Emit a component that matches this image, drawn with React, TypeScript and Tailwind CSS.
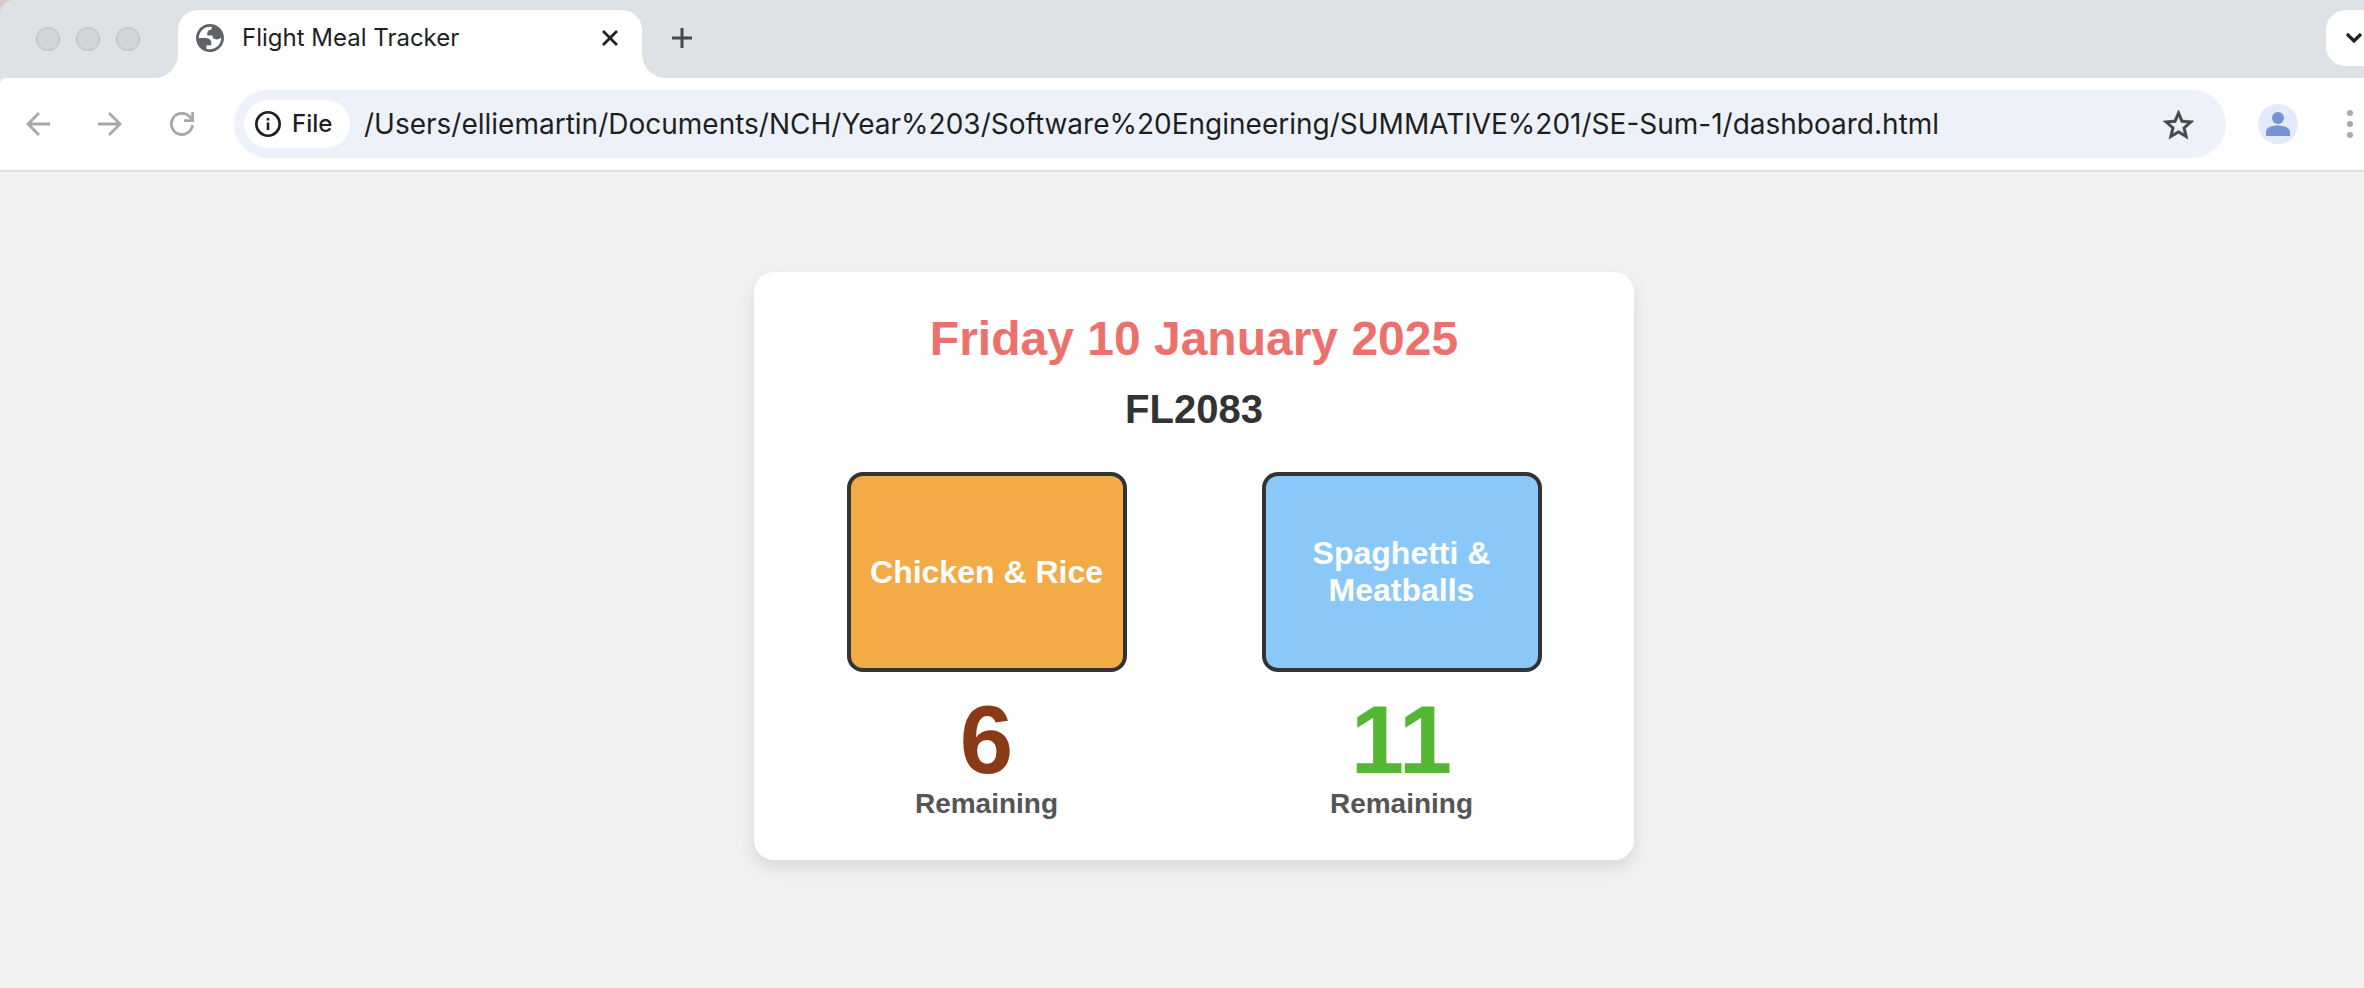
import React from "react";

const meals = [
  { name: "Chicken & Rice", remaining: 6, box: "bg-[#f2ab46]", count: "text-[#8b3a17]" },
  { name: "Spaghetti & Meatballs", remaining: 11, box: "bg-[#8ac8f9]", count: "text-[#55b634]" },
];

function GlobeIcon() {
  return (
    <svg viewBox="2 2 20 20" className="size-7 shrink-0" fill="#5f6368" fillRule="evenodd" aria-hidden="true">
      <path d="M12 2C6.48 2 2 6.48 2 12s4.48 10 10 10 10-4.48 10-10S17.52 2 12 2zM4 12h4.4c3.407.022 4.922 1.73 4.543 5.127H9.488v2.47a8.004 8.004 0 0 0 10.498-8.08C19.327 12.506 18.332 13 17 13c-2.137 0-3.206-.916-3.206-2.75h-3.748c-.274-2.728.683-4.092 2.87-4.092 0-.975.327-1.597.811-1.97A8.004 8.004 0 0 0 4 12z" />
    </svg>
  );
}

function TabStrip() {
  return (
    <div className="flex h-[78px] items-end overflow-hidden rounded-tl-[14px] bg-[#dde2e6]">
      <div className="flex h-full items-center gap-4 pl-9">
        <span className="size-6 rounded-full border border-[#b9bbbd] bg-[#d2d5d7]" />
        <span className="size-6 rounded-full border border-[#b9bbbd] bg-[#d2d5d7]" />
        <span className="size-6 rounded-full border border-[#b9bbbd] bg-[#d2d5d7]" />
      </div>
      <div className="ml-[14px] size-6 bg-white">
        <div className="size-full rounded-br-full bg-[#dde2e6]" />
      </div>
      <div className="flex h-[68px] w-[464px] items-center rounded-t-[20px] bg-white pr-6 pb-3 pl-[18px]">
        <GlobeIcon />
        <span className="ml-[18px] grow text-2xl text-[#1f1f1f]">Flight Meal Tracker</span>
        <button type="button" aria-label="Close tab">
          <svg viewBox="0 0 16 16" className="size-4" stroke="#1f1f1f" strokeWidth="2.8" aria-hidden="true">
            <path d="M1 1l14 14M15 1L1 15" />
          </svg>
        </button>
      </div>
      <div className="size-6 bg-white">
        <div className="size-full rounded-bl-full bg-[#dde2e6]" />
      </div>
      <button type="button" aria-label="New tab" className="mb-[30px] ml-[6px]">
        <svg viewBox="0 0 20 20" className="size-5" stroke="#474747" strokeWidth="3" aria-hidden="true">
          <path d="M10 0v20M0 10h20" />
        </svg>
      </button>
      <button
        type="button"
        aria-label="Search tabs"
        className="mr-[6px] mb-3 ml-auto flex h-14 w-14 items-center justify-center rounded-[20px] bg-white"
      >
        <svg viewBox="0 0 18 12" className="h-3 w-[18px]" fill="none" stroke="#1f1f1f" strokeWidth="3.2" aria-hidden="true">
          <path d="M2 2l7 7 7-7" />
        </svg>
      </button>
    </div>
  );
}

function Toolbar() {
  return (
    <div className="flex h-[94px] items-center rounded-tl-[6px] border-b-2 border-[#dfdfdf] bg-white pl-[26px]">
      <div className="flex items-center gap-12 text-[#a8a8a8]">
        <button type="button" aria-label="Back">
          <svg viewBox="0 0 24 24" className="size-6" fill="none" stroke="currentColor" strokeWidth="2.8" aria-hidden="true">
            <path d="M24 12H2M13 1L2 12l11 11" />
          </svg>
        </button>
        <button type="button" aria-label="Forward">
          <svg viewBox="0 0 24 24" className="size-6" fill="none" stroke="currentColor" strokeWidth="2.8" aria-hidden="true">
            <path d="M0 12h22M11 1l11 11-11 11" />
          </svg>
        </button>
        <button type="button" aria-label="Reload">
          <svg viewBox="0 0 24 24" className="size-6" fill="none" stroke="currentColor" strokeWidth="2.8" aria-hidden="true">
            <path d="M22.5 13A10.600 10.600 0 1 1 20 5l2 2.600" />
            <path d="M22.6 0v8.600H14" />
          </svg>
        </button>
      </div>
      <div className="ml-10 flex h-[68px] grow items-center rounded-full bg-[#edf2fa] pr-8 pl-[10px]">
        <button type="button" className="flex h-12 w-[106px] shrink-0 items-center rounded-full bg-white pl-[11px]">
          <svg viewBox="0 0 26 26" className="size-[26px]" fill="none" stroke="#1f1f1f" strokeWidth="2.6" aria-hidden="true">
            <circle cx="13" cy="13" r="11.7" />
            <path d="M13 11.5v7.500M13 7v2.600" />
          </svg>
          <span className="ml-[11px] text-2xl font-medium text-[#1f1f1f]">File</span>
        </button>
        <input
          aria-label="Address"
          readOnly
          value="/Users/elliemartin/Documents/NCH/Year%203/Software%20Engineering/SUMMATIVE%201/SE-Sum-1/dashboard.html"
          className="ml-[14px] min-w-0 grow bg-transparent text-[28px] text-[#1f1f1f] outline-none"
        />
        <button type="button" aria-label="Bookmark this page">
          <svg
            viewBox="2 2 20 19"
            className="h-[29px] w-[31px] overflow-visible"
            fill="#474747"
            stroke="#474747"
            strokeWidth="0.4"
            aria-hidden="true"
          >
            <path d="M22 9.240l-7.190-.620L12 2 9.190 8.630 2 9.240l5.460 4.730L5.820 21 12 17.270 18.180 21l-1.630-7.030L22 9.240zM12 15.400l-3.760 2.270 1-4.280-3.320-2.880 4.380-.380L12 6.100l1.710 4.040 4.380.380-3.320 2.880 1 4.280L12 15.400z" />
          </svg>
        </button>
      </div>
      <button
        type="button"
        aria-label="Profile"
        className="ml-8 flex size-10 items-center justify-center rounded-full bg-[#e3eafb]"
      >
        <svg viewBox="0 0 24 24" className="size-6" fill="#7693d8" aria-hidden="true">
          <circle cx="12" cy="6" r="6" />
          <path d="M0 24v-4c0-4.500 6-6.500 12-6.500s12 2 12 6.500v4z" />
        </svg>
      </button>
      <button type="button" aria-label="Menu" className="mr-[34px] ml-12">
        <svg viewBox="0 0 8 28" className="h-7 w-2" fill="#a8a8a8" aria-hidden="true">
          <circle cx="4" cy="3" r="3" />
          <circle cx="4" cy="14" r="3" />
          <circle cx="4" cy="25" r="3" />
        </svg>
      </button>
    </div>
  );
}

export default function App() {
  return (
    <div className="min-h-screen overflow-hidden bg-[#f1f1f1]">
      {/* The window reaches 24px past the right edge of the screen. */}
      <div className="w-[calc(100%+24px)]">
        <header className="bg-[#dde2e6] font-['Inter',sans-serif]">
          <div className="bg-[#dcc8c5]">
            <TabStrip />
          </div>
          <Toolbar />
        </header>
        <main className="flex justify-center px-5 py-[100px] font-['Liberation_Sans',Arial,sans-serif] font-bold">
          <section className="w-full max-w-[880px] rounded-[20px] bg-white p-10 text-center shadow-[0_8px_16px_rgba(0,0,0,0.1)]">
            <h1 className="mb-5 text-5xl leading-[54px] text-[#ec716d]">Friday 10 January 2025</h1>
            <h2 className="mb-10 text-[40px] leading-[46px] text-[#333]">FL2083</h2>
            <div className="flex flex-wrap justify-center gap-[135px]">
              {meals.map((meal) => (
                <div key={meal.name}>
                  <button
                    type="button"
                    className={`flex h-[200px] w-[280px] items-center justify-center rounded-2xl border-4 border-[#333] text-[32px] leading-[37px] text-white ${meal.box}`}
                  >
                    {meal.name}
                  </button>
                  <p className={`mt-5 text-8xl leading-none ${meal.count}`}>{meal.remaining}</p>
                  <p className="text-[28px] leading-8 text-[#555]">Remaining</p>
                </div>
              ))}
            </div>
          </section>
        </main>
      </div>
    </div>
  );
}
